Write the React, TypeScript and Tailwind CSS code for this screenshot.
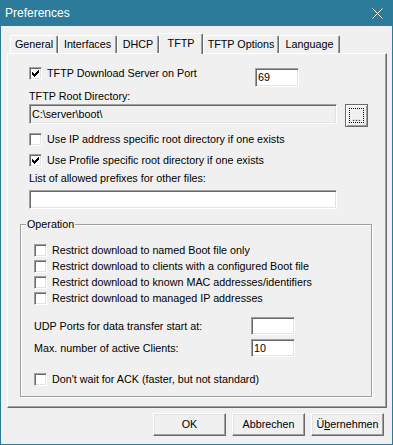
import type { ReactNode } from "react";
import { clsx } from "clsx";

const tabs = [
  { label: "General", width: "w-[48px]" },
  { label: "Interfaces", width: "w-[59px]" },
  { label: "DHCP", width: "w-[42px]" },
  { label: "TFTP", width: "w-[44px]", selected: true },
  { label: "TFTP Options", width: "w-[76px]" },
  { label: "Language", width: "w-[61px]" },
];

const restrictions = [
  "Restrict download to named Boot file only",
  "Restrict download to clients with a configured Boot file",
  "Restrict download to known MAC addresses/identifiers",
  "Restrict download to managed IP addresses",
];

// classic 7x7 tick, one 1x3 bar per column
const tick = [2, 3, 4, 3, 2, 1, 0];

function CheckBox({ checked }: { checked?: boolean }) {
  return (
    <span className="flex h-[13px] w-[13px] shrink-0 items-center justify-center border border-t-[#a0a0a0] border-l-[#a0a0a0] border-b-white border-r-white bg-white shadow-[inset_1px_1px_0_#696969,inset_-1px_-1px_0_#e3e3e3]">
      {checked && (
        <svg width="7" height="7" viewBox="0 0 7 7" shapeRendering="crispEdges">
          {tick.map((y, x) => (
            <rect key={x} x={x} y={y} width="1" height="3" fill="#000" />
          ))}
        </svg>
      )}
    </span>
  );
}

function CheckRow({ checked, children, className }: { checked?: boolean; children: ReactNode; className?: string }) {
  return (
    <div className={clsx("flex items-start", className)}>
      <CheckBox checked={checked} />
      <span className="ml-[5px] whitespace-nowrap">{children}</span>
    </div>
  );
}

function TextBox({ value, className, disabled }: { value?: string; className: string; disabled?: boolean }) {
  return (
    <div
      className={clsx(
        "flex shrink-0 items-center border border-t-[#a0a0a0] border-l-[#a0a0a0] border-b-white border-r-white pl-[2px] shadow-[inset_1px_1px_0_#696969,inset_-1px_-1px_0_#e3e3e3]",
        disabled ? "bg-[#f0f0f0]" : "bg-white",
        className
      )}
    >
      {value}
    </div>
  );
}

function Button({ children }: { children: ReactNode }) {
  return (
    <button className="flex h-[23px] w-[73px] items-center justify-center border border-t-white border-l-white border-b-[#696969] border-r-[#696969] bg-[#f0f0f0] shadow-[inset_-1px_-1px_0_#a0a0a0,inset_1px_1px_0_#e3e3e3]">
      {children}
    </button>
  );
}

export default function App() {
  return (
    <div className="flex h-[445px] w-[393px] flex-col bg-[#f0f0f0] font-['Liberation_Sans',Arial,sans-serif] text-[10.75px] leading-[13px] text-black">
      {/* Title bar */}
      <div className="flex h-[26px] shrink-0 items-center justify-between bg-[#2d7b9a] pl-[5px] pr-[10px] text-[12px] text-white">
        <span>Preferences</span>
        <svg width="11" height="11" viewBox="0 0 11 11">
          <path d="M0.5 0.5 L10.5 10.5 M10.5 0.5 L0.5 10.5" stroke="#fff" strokeWidth="1" />
        </svg>
      </div>

      <div className="flex flex-1 flex-col border-x border-b border-[#2d7b9a] pl-[6px]">
        {/* Tabs */}
        <div className="mt-[7px] flex h-[20px] items-end pl-[3px]">
          {tabs.map((t) => (
            <div
              key={t.label}
              className={clsx(
                "flex shrink-0 items-center justify-center rounded-t-[2px] border-x border-t border-t-white border-l-white border-r-[#696969] bg-[#f0f0f0] shadow-[inset_-1px_0_0_#a0a0a0]",
                t.width,
                t.selected ? "relative z-10 -mb-px h-[21px] pb-[2px]" : "h-[18px]"
              )}
            >
              {t.label}
            </div>
          ))}
        </div>

        {/* Tab page */}
        <div className="flex h-[355px] w-[380px] flex-col border border-t-white border-l-white border-b-[#696969] border-r-[#696969] pl-[12px] shadow-[inset_-1px_-1px_0_#a0a0a0]">
          <div className="flex flex-col pl-[9px]">
            <div className="mt-[13px] flex h-[20px] items-start">
              <CheckRow checked className="w-[226px]">
                TFTP Download Server on Port
              </CheckRow>
              <TextBox value="69" className="mt-px h-[19px] w-[44px]" />
            </div>

            <div className="mt-[3px] h-[13px]">TFTP Root Directory:</div>

            <div className="mt-px flex items-start">
              <TextBox value="C:\server\boot\" disabled className="h-[20px] w-[308px]" />
              <button className="ml-[8px] flex h-[23px] w-[23px] items-center justify-center border border-[#696969] bg-[#f0f0f0] shadow-[inset_1px_1px_0_#fff,inset_-1px_-1px_0_#a0a0a0]">
                <span className="flex h-[15px] w-[15px] items-end justify-center border border-dotted border-black pb-px leading-[8px]">
                  ...
                </span>
              </button>
            </div>

            <CheckRow className="mt-[6px]">Use IP address specific root directory if one exists</CheckRow>
            <CheckRow checked className="mt-[8px]">
              Use Profile specific root directory if one exists
            </CheckRow>

            <div className="mt-[5px] h-[13px]">List of allowed prefixes for other files:</div>
            <TextBox className="mt-[5px] h-[19px] w-[308px]" />
          </div>

          {/* Operation group */}
          <fieldset className="mt-[9px] w-[352px] border border-[#a0a0a0] shadow-[inset_1px_1px_0_#fff,1px_1px_0_#fff]">
            <legend className="ml-[5px] bg-[#f0f0f0] px-px">Operation</legend>
            <div className="flex flex-col pb-[10px] pl-[13px] pt-[13px]">
              {restrictions.map((r) => (
                <CheckRow key={r} className="h-[16px]">
                  {r}
                </CheckRow>
              ))}

              <div className="mt-[9px] flex h-[18px] items-center">
                <span className="w-[217px]">UDP Ports for data transfer start at:</span>
                <TextBox className="h-[18px] w-[44px]" />
              </div>
              <div className="mt-[4px] flex h-[18px] items-center">
                <span className="w-[217px]">Max. number of active Clients:</span>
                <TextBox value="10" className="h-[18px] w-[44px]" />
              </div>

              <CheckRow className="mt-[16px]">Don't wait for ACK (faster, but not standard)</CheckRow>
            </div>
          </fieldset>
        </div>

        {/* Dialog buttons */}
        <div className="mt-[5px] flex justify-end gap-[6px] pr-[8px]">
          <Button>OK</Button>
          <Button>Abbrechen</Button>
          <Button>
            Ü<span className="underline underline-offset-1">b</span>ernehmen
          </Button>
        </div>
      </div>
    </div>
  );
}
